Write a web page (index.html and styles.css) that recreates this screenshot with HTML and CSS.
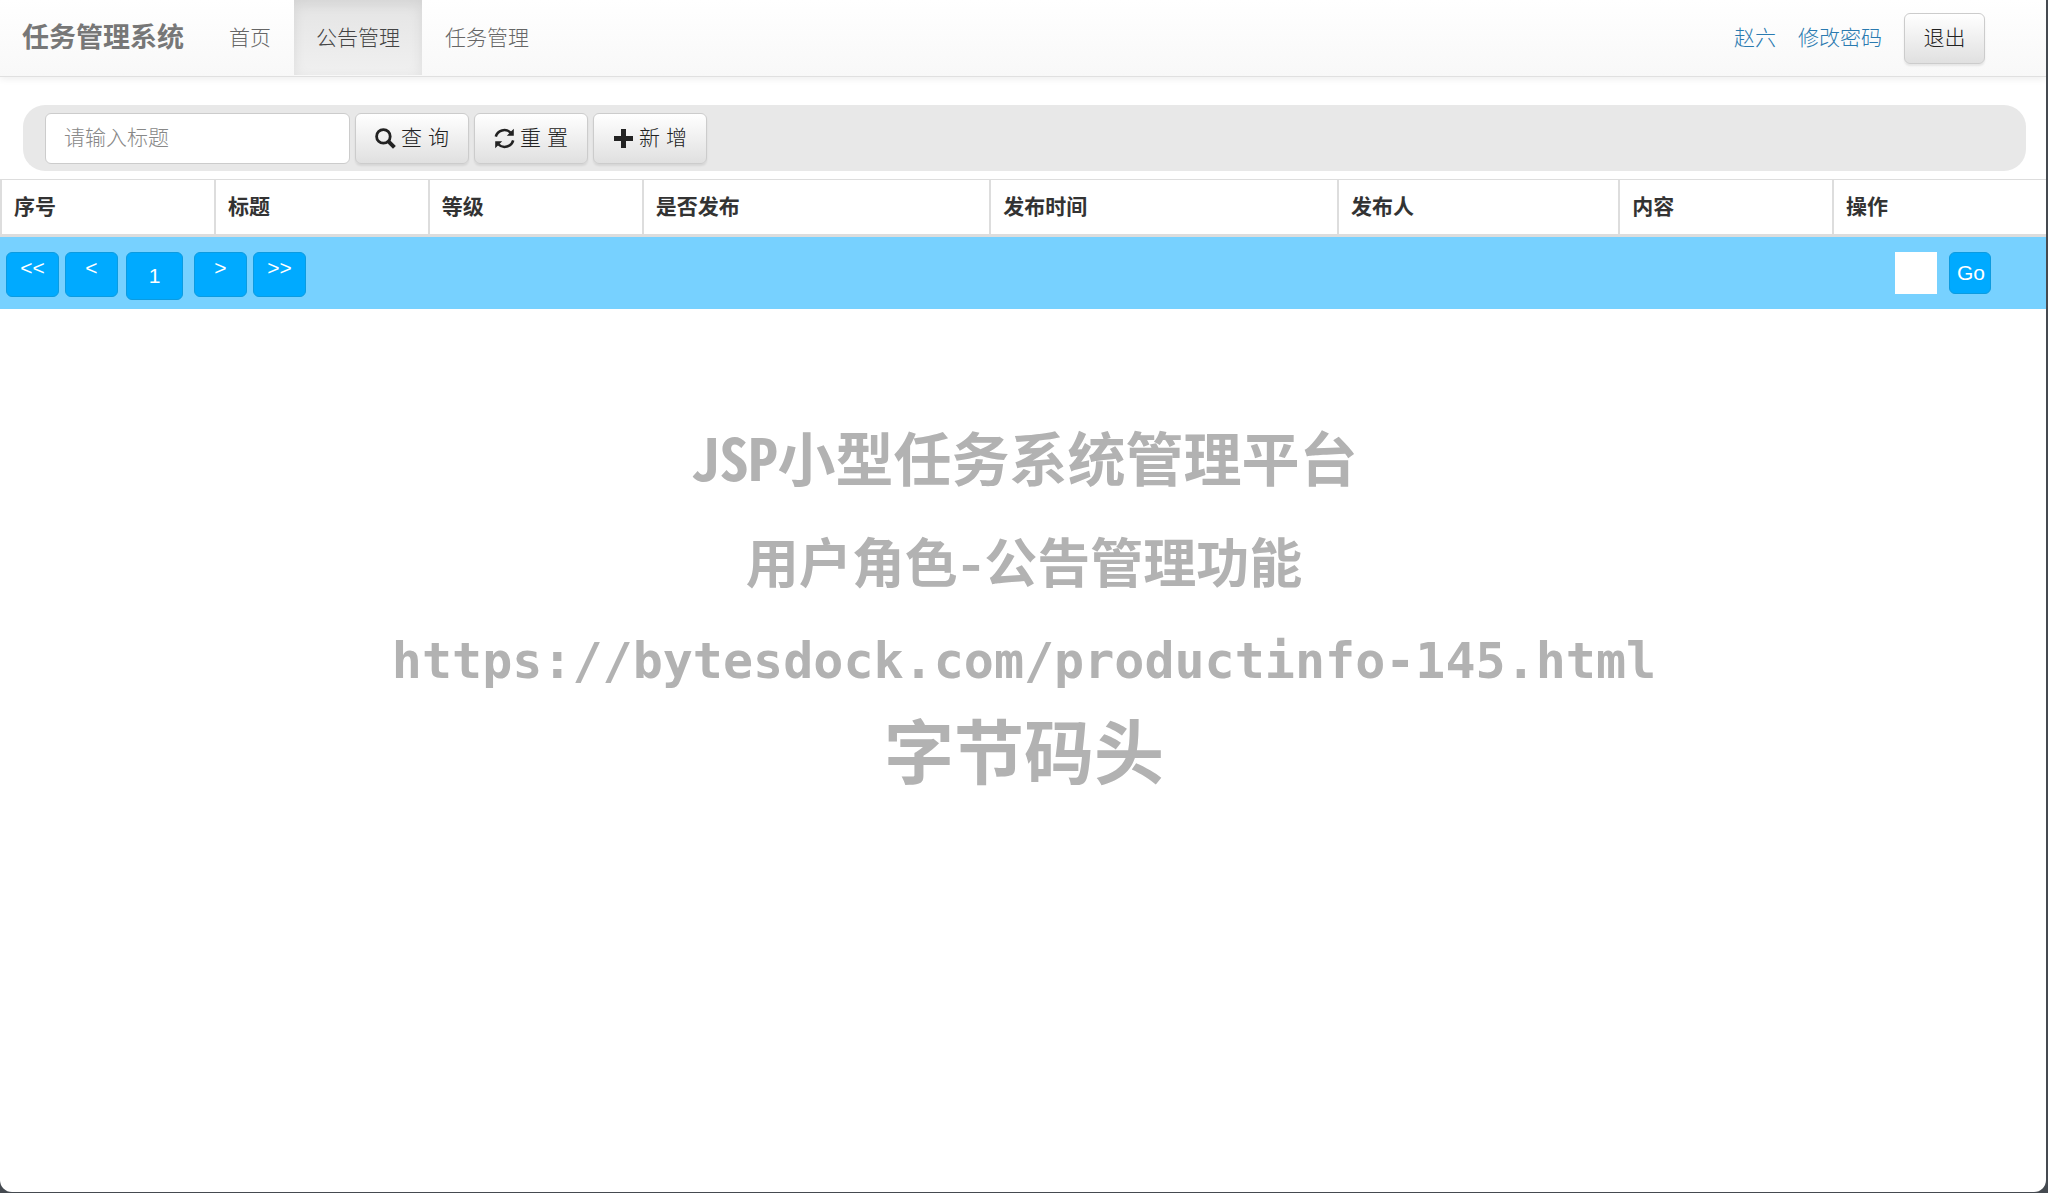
FILE: index.html
```html
<!DOCTYPE html>
<html lang="zh-CN">
<head>
<meta charset="utf-8">
<title>任务管理系统</title>
<link rel="stylesheet" href="styles.css">
</head>
<body>
<header class="navbar">
  <a class="brand" href="#">任务管理系统</a>
  <nav class="menu">
    <a href="#">首页</a>
    <a class="active" href="#">公告管理</a>
    <a href="#">任务管理</a>
  </nav>
  <div class="account">
    <a href="#">赵六</a>
    <a href="#">修改密码</a>
    <button class="btn" type="button">退出</button>
  </div>
</header>
<main>
  <form class="search">
    <input class="field" type="text" placeholder="请输入标题" aria-label="标题">
    <button class="btn" type="button">
      <svg class="icon" viewBox="0 0 21 21" aria-hidden="true"><circle cx="8.4" cy="8.4" r="6.8" fill="none" stroke="currentColor" stroke-width="2.8"/><path d="M13.2 13.2L19.4 19.4" stroke="currentColor" stroke-width="4"/></svg>
      <span>查 询</span>
    </button>
    <button class="btn" type="button">
      <svg class="icon" viewBox="0 0 21 21" aria-hidden="true"><path d="M1.8 8.6A8.8 8.4 0 0 1 16.6 4.6M19.2 12.4A8.8 8.4 0 0 1 4.4 16.4" fill="none" stroke="currentColor" stroke-width="2.5"/><path d="M19.8 .8V7.8H12.8ZM1.2 20.2V13.2H8.2Z" fill="currentColor"/></svg>
      <span>重 置</span>
    </button>
    <button class="btn" type="button">
      <svg class="icon" viewBox="0 0 21 21" aria-hidden="true"><path d="M8 1h5v7h7v5h-7v7H8v-7H1V8h7z" fill="currentColor"/></svg>
      <span>新 增</span>
    </button>
  </form>
  <table class="notices">
    <colgroup><col class="c-s"><col class="c-s"><col class="c-s"><col class="c-l"><col class="c-l"><col class="c-m"><col class="c-s"><col></colgroup>
    <thead>
      <tr><th>序号</th><th>标题</th><th>等级</th><th>是否发布</th><th>发布时间</th><th>发布人</th><th>内容</th><th>操作</th></tr>
    </thead>
  </table>
  <div class="pager">
    <button class="page" type="button">&lt;&lt;</button>
    <button class="page" type="button">&lt;</button>
    <button class="page current" type="button">1</button>
    <button class="page" type="button">&gt;</button>
    <button class="page" type="button">&gt;&gt;</button>
    <div class="jump">
      <input type="text" aria-label="页码">
      <button type="button">Go</button>
    </div>
  </div>
  <section class="about">
    <p class="name">JSP小型任务系统管理平台</p>
    <p class="role">用户角色-公告管理功能</p>
    <p class="url">https://bytesdock.com/productinfo-145.html</p>
    <p class="author">字节码头</p>
  </section>
</main>
</body>
</html>
```

FILE: styles.css
```css
* { box-sizing: border-box; }
html { background: #454a50; }
body {
  margin: 0 2px 0 0;
  min-height: calc(100vh - 1px);
  background: #fff;
  border-radius: 0 0 12px 12px;
  color: #333;
  font: 300 21px/30px "Liberation Sans", "Noto Sans CJK SC", sans-serif;
}
a { text-decoration: none; }
button, input { font: inherit; color: inherit; margin: 0; }

.navbar {
  display: flex;
  align-items: stretch;
  height: 77px;
  background: linear-gradient(#fff, #f8f8f8);
  border-bottom: 1px solid #e0e0e0;
  box-shadow: 0 2px 7px rgba(0, 0, 0, .07);
}
.brand { padding: 23px 23px 22px 22px; font-size: 27px; font-weight: 700; color: #777; }
.menu { display: flex; gap: 1px; }
.menu a { padding: 23px 22px 22px; color: #666; }
.menu .active {
  color: #444;
  background: linear-gradient(#e4e4e4, #f0f0f0);
  box-shadow: inset 0 4px 13px rgba(0, 0, 0, .08);
  margin-bottom: 1px;
}
.account { display: flex; align-items: center; gap: 22px; margin-left: auto; padding-right: 61px; }
.account a { color: #2a7ab0; }
.account .btn { width: 81px; }

.btn {
  display: flex;
  align-items: center;
  justify-content: center;
  gap: 5px;
  height: 51px;
  padding: 0;
  border: 1px solid #ccc;
  border-radius: 6px;
  background: linear-gradient(#fff, #e0e0e0);
  box-shadow: 0 2px 2px rgba(0, 0, 0, .08);
  color: #222;
}
.icon { width: 21px; height: 21px; }

.search {
  display: flex;
  align-items: center;
  gap: 5px;
  height: 66px;
  margin: 28px 20px 8px 23px;
  padding-left: 22px;
  border-radius: 22px;
  background: #e8e8e8;
}
.search .btn { width: 114px; }
.field {
  width: 305px;
  height: 51px;
  padding: 0 18px;
  border: 1px solid #ccc;
  border-radius: 6px;
  background: #fff;
}
.field::placeholder { color: #888; opacity: 1; }

.notices { width: 100%; table-layout: fixed; border-collapse: collapse; }
.notices th {
  height: 56px;
  padding: 0 12px;
  border: 1px solid #ddd;
  border-width: 1px 0 3px 2px;
  text-align: left;
  font-weight: 700;
}
.c-s { width: 10.46%; }
.c-l { width: 17%; }
.c-m { width: 13.75%; }

.pager {
  display: flex;
  align-items: flex-start;
  gap: 6px;
  height: 72px;
  padding: 15px 55px 0 6px;
  background: #77d1ff;
}
.page, .jump button {
  height: 45px;
  border: 1px solid #0c9be0;
  border-radius: 6px;
  background: #00aaff;
  color: #fff;
  font-weight: 400;
}
.page { width: 53px; padding: 0 0 14px; }
.pager .current { width: 57px; height: 48px; margin: 0 5px 0 2px; padding: 0; }
.jump { display: flex; gap: 12px; margin-left: auto; }
.jump input { width: 42px; height: 42px; border: 0; background: #fff; }
.jump button { width: 42px; height: 42px; padding: 0 0 0 2px; }

.about {
  padding: 97px 0 100px 2px;
  color: #b2b2b2;
  font-family: "Noto Sans CJK SC", sans-serif;
  font-weight: 700;
  font-feature-settings: "hwid";
  text-align: center;
}
.about p { margin: 0; }
.name { font-size: 58px; line-height: 100px; }
.role { font-size: 53px; line-height: 108px; }
.url { font-family: "DejaVu Sans Mono", monospace; font-size: 50px; line-height: 94px; }
.author { font-size: 70px; line-height: 82px; }
```
